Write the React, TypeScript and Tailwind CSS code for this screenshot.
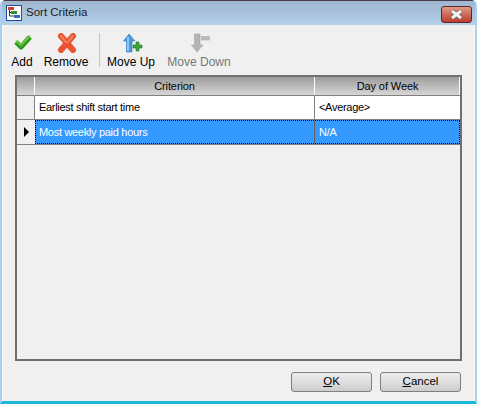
import React from "react";

const font = { fontFamily: '"Liberation Sans", Arial, sans-serif' };

const ToolButton = ({
  label,
  icon,
  disabled,
  width,
}: {
  label: string;
  icon: React.ReactNode;
  disabled?: boolean;
  width: string;
}) => (
  <div className={`flex flex-col items-center ${width}`}>
    <div className="h-[23px] flex items-center justify-center">{icon}</div>
    <span className={`text-[12px] leading-[14px] mt-[1px] whitespace-nowrap ${disabled ? "text-[#707a72]" : "text-black"}`}>
      {label}
    </span>
  </div>
);

const CheckIcon = () => (
  <svg className="ml-[2px]" width="20" height="17" viewBox="0 0 20 17">
    <path d="M3 8 L8 13 L17 3" fill="none" stroke="#2f9a22" strokeWidth="5" strokeLinejoin="round" />
    <path d="M3 7 L8 11 L17 2" fill="none" stroke="#6cc944" strokeWidth="2" />
  </svg>
);

const CrossIcon = () => (
  <svg className="ml-[2px]" width="20" height="20" viewBox="0 0 20 20">
    <path d="M4 3 L16 17 M16 3 L4 17" fill="none" stroke="#e9552f" strokeWidth="6" strokeLinecap="round" />
    <path d="M4 3 L9 9 M16 3 L11 9" fill="none" stroke="#f5805c" strokeWidth="2" strokeLinecap="round" />
  </svg>
);

const MoveUpIcon = () => (
  <svg className="ml-[4px]" width="20" height="20" viewBox="0 0 20 20">
    <path d="M6 1 L12 8 L9 8 L9 19 L3.500 19 L3.500 8 L0.500 8 Z" fill="#4a9ae0" stroke="#2f78bd" strokeWidth="0.600" />
    <path d="M5 4 L5 18" stroke="#a5d4f7" strokeWidth="1.500" />
    <path d="M13 9 H16 V12 H19 V15 H16 V18 H13 V15 H10 V12 H13 Z" fill="#3fa33a" stroke="#24782a" strokeWidth="0.600" />
  </svg>
);

const MoveDownIcon = () => (
  <svg className="ml-[3px]" width="20" height="20" viewBox="0 0 20 20">
    <path d="M3.500 1 H9 V12 H12 L6 19 L0.500 12 H3.500 Z" fill="#b4b4b4" stroke="#a4a4a4" strokeWidth="0.600" />
    <rect x="10.500" y="3.500" width="8" height="3.500" fill="#bcbcbc" stroke="#a8a8a8" strokeWidth="0.600" />
  </svg>
);

const AppIcon = () => (
  <svg width="16" height="16" viewBox="0 0 16 16">
    <rect x="0.500" y="0.500" width="15" height="15" fill="#ffffff" stroke="#1f4f9a" />
    <rect x="2" y="2" width="6" height="3" fill="#c8402c" />
    <rect x="5" y="6" width="6" height="3" fill="#2d8f3a" />
    <rect x="8" y="10" width="6" height="3" fill="#2a6fc0" />
    <path d="M3.500 5 V11 H8 M3.500 7.500 H5" fill="none" stroke="#333333" />
  </svg>
);

const CloseGlyph = () => (
  <svg width="15" height="11" viewBox="0 0 15 11">
    <path d="M3 2 L12 9 M12 2 L3 9" fill="none" stroke="#5c5c5c" strokeWidth="4.500" />
    <path d="M3 2 L12 9 M12 2 L3 9" fill="none" stroke="#f4f4f4" strokeWidth="3" />
  </svg>
);

const Button = ({ letter, rest }: { letter: string; rest: string }) => (
  <div className="w-[81px] h-[20px] rounded-[3px] border border-[#7f7f7f] bg-gradient-to-b from-[#ececec] via-[#dedede] to-[#cccccc] flex items-center justify-center text-[11.5px] text-black">
    <span>
      <span className="underline">{letter}</span>
      {rest}
    </span>
  </div>
);

const headerCell =
  "h-full flex items-center justify-center bg-gradient-to-b from-[#9c9c9c] via-[#bababa] to-[#d6d6d6] border-r border-white";

export default function App() {
  return (
    <div
      className="w-[477px] h-[404px] flex flex-col overflow-hidden bg-gradient-to-b from-[#b4cde4] to-[#a9c9e6] border-x-[2px] border-b-[3px] border-x-[#a9d0ef] border-b-[#19b7dc] rounded-t-[5px]"
      style={font}
    >
      {/* Title bar */}
      <div className="h-[25px] -mx-[2px] px-[6px] flex items-center shrink-0 bg-gradient-to-b from-[#9fb6cf] to-[#b4d0ea] border-t border-[#4a3a4a]">
        <AppIcon />
        <span className="ml-[4px] text-[11.5px] text-[#1c1c1c]">Sort Criteria</span>
        <div className="ml-auto mr-[-1px] mt-[2px] w-[31px] h-[17px] flex items-center justify-center rounded-[3px] border border-[#5a2a2a] bg-gradient-to-b from-[#e29a8a] via-[#cf6a5a] to-[#c0392b]">
          <CloseGlyph />
        </div>
      </div>

      {/* Body */}
      <div className="flex-1 flex flex-col bg-[#f0f0f0] border-x border-[#fafafa]">
        {/* Toolbar */}
        <div className="h-[50px] shrink-0 flex items-start pt-[6px] pl-[4px]">
          <ToolButton label="Add" width="w-[30px]" icon={<CheckIcon />} />
          <ToolButton label="Remove" width="w-[48px] ml-[5px]" icon={<CrossIcon />} />
          <div className="w-px h-[34px] bg-[#c4c4c4] ml-[9px] mt-[2px]" />
          <ToolButton label="Move Up" width="w-[52px] ml-[5px]" icon={<MoveUpIcon />} />
          <ToolButton label="Move Down" disabled width="w-[68px] ml-[8px]" icon={<MoveDownIcon />} />
        </div>

        {/* Grid */}
        <div className="mx-[12px] h-[286px] shrink-0 border-2 border-[#707070] bg-[#f0f0f0] flex flex-col text-[11px] tracking-[-0.3px]">
          <div className="h-[19px] flex shrink-0 border-b border-[#808080] text-black tracking-[-0.1px]">
            <div className={`${headerCell} w-[18px]`} />
            <div className={`${headerCell} w-[280px]`}>Criterion</div>
            <div className={`${headerCell} flex-1 pl-[1px]`}>Day of Week</div>
          </div>
          <div className="h-[24px] flex shrink-0 border-b border-[#808080] bg-white">
            <div className="w-[18px] bg-[#f0f0f0] border-r border-[#808080]" />
            <div className="w-[280px] pl-[4px] flex items-center border-r border-[#808080]">Earliest shift start time</div>
            <div className="flex-1 pl-[4px] flex items-center">&lt;Average&gt;</div>
          </div>
          <div className="h-[25px] flex shrink-0 border-b border-[#808080]">
            <div className="w-[18px] bg-[#f0f0f0] flex items-center justify-center">
              <div className="w-0 h-0 border-y-[5px] border-y-transparent border-l-[5px] border-l-black" />
            </div>
            <div className="flex-1 flex bg-[#3399ff] text-white border border-dotted border-black">
              <div className="w-[279px] pl-[3px] flex items-center border-r border-[#666666]">Most weekly paid hours</div>
              <div className="flex-1 pl-[4px] flex items-center">N/A</div>
            </div>
          </div>
        </div>

        {/* Footer */}
        <div className="flex justify-end gap-[8px] pt-[11px] pr-[13px]">
          <Button letter="O" rest="K" />
          <Button letter="C" rest="ancel" />
        </div>
      </div>
    </div>
  );
}
